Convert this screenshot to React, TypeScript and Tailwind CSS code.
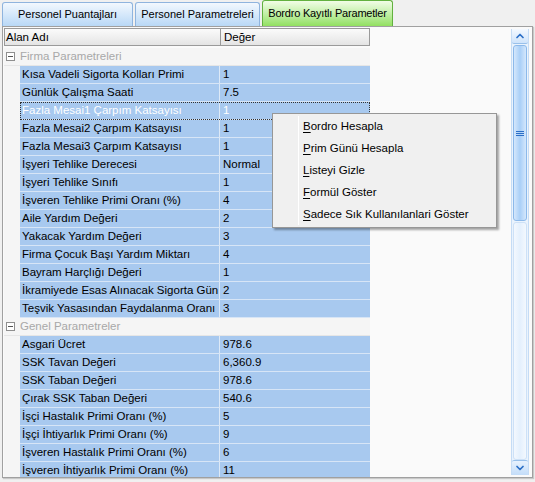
import { ChevronUp, ChevronDown } from "lucide-react";

type Row = { name: string; value: string; selected?: boolean };

const firma: Row[] = [
  { name: "Kısa Vadeli Sigorta Kolları Primi", value: "1" },
  { name: "Günlük Çalışma Saati", value: "7.5" },
  { name: "Fazla Mesai1 Çarpım Katsayısı", value: "1", selected: true },
  { name: "Fazla Mesai2 Çarpım Katsayısı", value: "1" },
  { name: "Fazla Mesai3 Çarpım Katsayısı", value: "1" },
  { name: "İşyeri Tehlike Derecesi", value: "Normal" },
  { name: "İşyeri Tehlike Sınıfı", value: "1" },
  { name: "İşveren Tehlike Primi Oranı (%)", value: "4" },
  { name: "Aile Yardım Değeri", value: "2" },
  { name: "Yakacak Yardım Değeri", value: "3" },
  { name: "Firma Çocuk Başı Yardım Miktarı", value: "4" },
  { name: "Bayram Harçlığı Değeri", value: "1" },
  { name: "İkramiyede Esas Alınacak Sigorta Gün Sayısı", value: "2" },
  { name: "Teşvik Yasasından Faydalanma Oranı", value: "3" },
];

const genel: Row[] = [
  { name: "Asgari Ücret", value: "978.6" },
  { name: "SSK Tavan Değeri", value: "6,360.9" },
  { name: "SSK Taban Değeri", value: "978.6" },
  { name: "Çırak SSK Taban Değeri", value: "540.6" },
  { name: "İşçi Hastalık Primi Oranı (%)", value: "5" },
  { name: "İşçi İhtiyarlık Primi Oranı (%)", value: "9" },
  { name: "İşveren Hastalık Primi Oranı (%)", value: "6" },
  { name: "İşveren İhtiyarlık Primi Oranı (%)", value: "11" },
];

const menu = [
  ["B", "ordro Hesapla"],
  ["P", "rim Günü Hesapla"],
  ["L", "isteyi Gizle"],
  ["F", "ormül Göster"],
  ["S", "adece Sık Kullanılanlari Göster"],
];

function Group({ title }: { title: string }) {
  return (
    <div className="flex h-[18px] items-center w-[366px] bg-[#f5f5f5] border-b border-[#e6e6e6]">
      <div className="w-[9px] h-[9px] ml-[2px] mr-[5px] border border-[#8f8f8f] flex items-center justify-center bg-white">
        <div className="w-[5px] h-px bg-[#555]" />
      </div>
      <span className="text-[#a8a8a8]">{title}</span>
    </div>
  );
}

function DataRow({ row }: { row: Row }) {
  return (
    <div className="flex h-[18px] w-[366px]">
      <div className="w-[16px] shrink-0 bg-[#f5f5f5]" />
      <div
        className={`flex flex-1 min-w-0 bg-[#a8c9ef] border-b border-[#d7e5f6] ${
          row.selected ? "outline outline-1 outline-dotted outline-[#333] -outline-offset-1 text-white" : "text-black"
        }`}
      >
        <div className="w-[200px] shrink-0 pl-[2px] border-r border-[#dde9f7] overflow-hidden whitespace-nowrap leading-[17px]">
          {row.name}
        </div>
        <div className="flex-1 min-w-0 pl-[3px] overflow-hidden whitespace-nowrap leading-[17px]">{row.value}</div>
      </div>
    </div>
  );
}

export default function App() {
  return (
    <div
      className="relative w-[535px] h-[482px] bg-[#f0f0f0] overflow-hidden text-[11.5px]"
      style={{ fontFamily: '"Liberation Sans", Arial, sans-serif' }}
    >
      {/* tabs */}
      <div className="flex items-end h-[26px] pl-[2px] gap-[2px] whitespace-nowrap text-[11px]">
        <div className="w-[131px] h-[24px] rounded-t-[3px] border border-b-0 border-[#8fb4de] bg-gradient-to-b from-[#f2f8fe] to-[#b9d8f6] flex items-center justify-center">
          Personel Puantajları
        </div>
        <div className="w-[125px] h-[24px] rounded-t-[3px] border border-b-0 border-[#8fb4de] bg-gradient-to-b from-[#f2f8fe] to-[#b9d8f6] flex items-center justify-center">
          Personel Parametreleri
        </div>
        <div className="w-[131px] h-[26px] rounded-t-[3px] border border-b-0 border-[#62b13f] bg-gradient-to-b from-[#f1fde6] to-[#92e060] flex items-center justify-center tracking-[-0.2px]">
          Bordro Kayıtlı Parametler
        </div>
      </div>

      {/* panel */}
      <div className="mx-[2px] h-[452px] border border-[#a0a0a0] bg-[#fafafa] shadow-[1px_1px_1px_#c8c8c8] flex">
        <div className="flex-1 pt-[1px] pl-px overflow-hidden">
          <div className="flex h-[18px] w-[366px] bg-gradient-to-b from-[#fbfbfb] to-[#e4e4e4] border border-[#9a9a9a]">
            <div className="w-[216px] pl-[1px] border-r border-[#9a9a9a] leading-[16px]">Alan Adı</div>
            <div className="flex-1 pl-[3px] leading-[16px]">Değer</div>
          </div>
          <div className="h-[2px]" />
          <Group title="Firma Parametreleri" />
          {firma.map((r) => (
            <DataRow key={r.name} row={r} />
          ))}
          <Group title="Genel Parametreler" />
          {genel.map((r) => (
            <DataRow key={r.name} row={r} />
          ))}
        </div>

        {/* scrollbar */}
        <div className="w-[18px] mr-[3px] mt-[2px] mb-[2px] flex flex-col bg-[#eaf3fd] border-x border-[#c5dcf5]">
          <div className="h-[15px] flex items-center justify-center bg-gradient-to-b from-[#f4f9ff] to-[#cfe4fb] border-b border-[#98c0ea] rounded-b-[2px]">
            <ChevronUp size={12} strokeWidth={3.5} className="text-[#2b6fc7]" />
          </div>
          <div className="h-[176px] mt-px mx-[1px] rounded-[3px] border border-[#8cb9ea] bg-gradient-to-r from-[#d4e7fc] via-[#a9cff7] to-[#d4e7fc] flex items-center justify-center">
            <div className="flex flex-col gap-[1px]">
              <div className="w-[8px] h-px bg-[#2b6fc7]" />
              <div className="w-[8px] h-px bg-[#2b6fc7]" />
              <div className="w-[8px] h-px bg-[#2b6fc7]" />
            </div>
          </div>
          <div className="flex-1 mx-[1px] mt-[1px] rounded-[3px] border border-[#cde1f7] bg-gradient-to-r from-[#f3f8fe] via-[#e4f0fd] to-[#f3f8fe]" />
          <div className="h-[15px] flex items-center justify-center bg-gradient-to-b from-[#e7f2fe] to-[#c3ddf9] border-t border-[#98c0ea] rounded-t-[2px]">
            <ChevronDown size={12} strokeWidth={3.5} className="text-[#2b6fc7]" />
          </div>
        </div>
      </div>

      {/* context menu */}
      <div className="absolute left-[272px] top-[113px] w-[225px] h-[115px] bg-[#f0f0f0] border border-[#979797] shadow-[2px_2px_2px_rgba(0,0,0,0.35)] py-[2px]">
        <div className="absolute left-[25px] top-[2px] bottom-[2px] w-px bg-[#e2e2e2] border-r border-white" />
        {menu.map(([k, rest]) => (
          <div key={k} className="h-[22px] flex items-center pl-[30px] text-black whitespace-nowrap">
            <span className="underline underline-offset-2">{k}</span>
            {rest}
          </div>
        ))}
      </div>
    </div>
  );
}
